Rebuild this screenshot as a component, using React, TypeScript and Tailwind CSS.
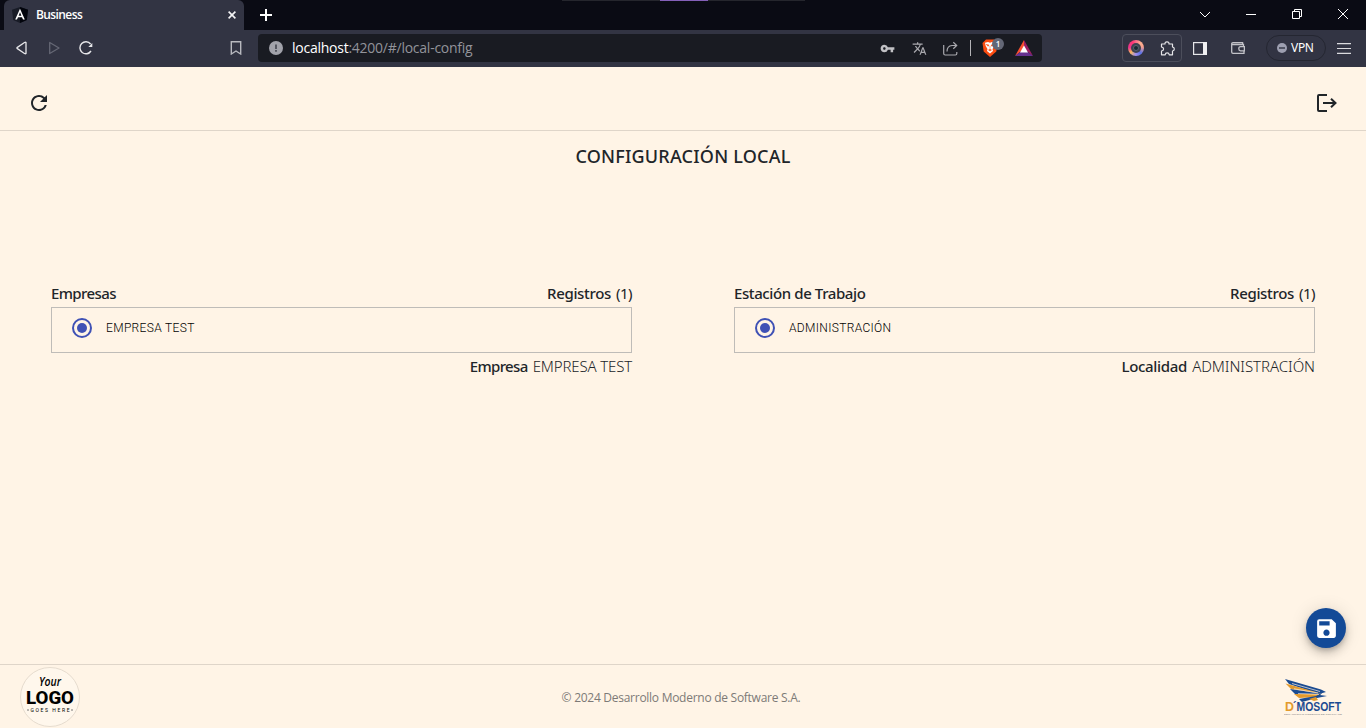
import type { ReactNode } from "react";
import { MdRefresh, MdSave, MdVpnKey, MdTranslate } from "react-icons/md";

function TabStrip() {
  return (
    <div className="relative flex h-[30px] shrink-0 bg-[#0a0b14]">
      <div className="ml-1 flex w-[240px] items-center rounded-t-[6px] bg-[#323443]">
        <svg className="ml-2 h-4 w-4" viewBox="0 0 16 16">
          <path d="M8 0 16 2.8 14.8 13 8 16 1.2 13 0 2.8Z" fill="#181b26" />
          <path d="M8 0 16 2.8 14.8 13 8 16Z" fill="#02040c" />
          <path d="M8 1.8 3.2 12.6H5l1-2.4h4l1 2.4h1.8ZM8 5.2 9.4 8.7H6.6Z" fill="#fff" />
        </svg>
        <span className="ml-2 flex-1 text-[12px] font-semibold leading-4 tracking-[-0.6px] text-white">Business</span>
        <svg className="mr-2 h-2 w-2" viewBox="0 0 8 8" stroke="#f4f4f6" strokeWidth="1.6">
          <path d="M.6.6 7.4 7.4M7.4.6.6 7.4" />
        </svg>
      </div>
      <svg className="ml-4 mt-[9px] h-3 w-3" viewBox="0 0 12 12" stroke="#fff" strokeWidth="2">
        <path d="M6 0V12M0 6H12" />
      </svg>
      <div className="absolute left-[562px] top-0 flex h-px w-[243px] justify-center bg-[#25262d]">
        <div className="h-px w-12 bg-[#8460b8]" />
      </div>
      <div className="ml-auto flex pt-[9px] text-white">
        <svg className="mr-[35px] h-[11px] w-[12px]" viewBox="0 0 12 11" fill="none" stroke="currentColor">
          <path d="M1 3 6 8 11 3" />
        </svg>
        <svg className="mr-9 h-[11px] w-[10px]" viewBox="0 0 10 11" stroke="currentColor">
          <path d="M0 5.5H10" />
        </svg>
        <svg className="mr-9 h-[10px] w-[10px]" viewBox="0 0 10 10" fill="none" stroke="currentColor">
          <path d="M.5 2.5H7.5V9.5H.5ZM2.5 2.5V.5H9.5V7.5H7.5" />
        </svg>
        <svg className="mr-[18px] h-[10px] w-[10px]" viewBox="0 0 10 10" stroke="currentColor">
          <path d="M0 0 10 10M10 0 0 10" />
        </svg>
      </div>
    </div>
  );
}

function AddressBar() {
  return (
    <div className="ml-4 flex h-7 w-[784px] items-center rounded-[4px] bg-[#191b22]">
      <svg className="ml-[11px] h-[14px] w-[14px]" viewBox="0 0 14 14">
        <circle cx="7" cy="7" r="7" fill="#a1a2aa" />
        <path d="M7 3.5V8M7 9V10.7" stroke="#4d4f59" strokeWidth="1.8" />
      </svg>
      <span className="ml-[9px] flex-1 text-[14px] leading-5 tracking-[-0.25px] text-[#92939a]">
        <span className="text-white">localhost</span>:4200/#/local-config
      </span>
      <MdVpnKey className="mr-[17px] h-[15px] w-[15px] text-[#c1c1c5]" />
      <MdTranslate className="mr-4 h-[15px] w-[15px] text-[#a9a9ae]" />
      <svg className="mr-3 h-[15px] w-[15px]" viewBox="0 0 15 15" fill="none" stroke="#a9a9ae" strokeWidth="1.2">
        <path d="M.7 4V12.5Q.7 14 2.2 14H12.4Q13.8 14 13.8 12.5V11M4 10.5Q4 5 9 4.5H13M10.3 1.2 13.7 4.5 10.3 7.8" />
      </svg>
      <div className="mr-[11px] h-4 w-px bg-[#b4b4b8]" />
      <div className="relative mr-[17px] h-[18px] w-[16px]">
        <svg className="h-[18px] w-[16px]" viewBox="0 0 16 18">
          <path d="M4 .5H12L15.5 4 14.3 12.5 8 18 1.7 12.5.5 4Z" fill="#fb4c11" />
          <path d="M3 3.8 6 3 8 3.7 10 3 13 3.8 12.3 7 10.5 10 11 12 8 14.5 5 12 5.5 10 3.7 7Z" fill="#fff" />
          <path d="M4.2 5.4 7 6 6.2 7.3ZM11.8 5.4 9 6 9.8 7.3ZM8 7V10M6.5 11 8 10.3 9.5 11 8 12Z" fill="#fb4c11" stroke="#fb4c11" strokeWidth=".5" />
        </svg>
        <span className="absolute -top-px left-[10px] flex h-3 w-3 items-center justify-center rounded-full bg-[#636776] text-[8px] font-semibold leading-none text-white">1</span>
      </div>
      <svg className="mr-[9px] h-[16px] w-[18px]" viewBox="0 0 18 16">
        <path d="M9 0 0 16 9 9Z" fill="#fb5030" />
        <path d="M9 0 18 16 9 9Z" fill="#9c1f63" />
        <path d="M0 16H18L9 9Z" fill="#65318f" />
        <path d="M9 5.5 13 12.5H5Z" fill="#fff" />
      </svg>
    </div>
  );
}

function Toolbar() {
  return (
    <div className="flex h-[37px] shrink-0 items-center bg-[#323443] pb-px">
      <svg className="ml-4 h-[14px] w-[11px]" viewBox="0 0 11 14" fill="none" stroke="#e6e6e9" strokeWidth="1.3" strokeLinejoin="round">
        <path d="M10 1.5V12.5Q9.5 13 8.5 12.5L1 7.4V6.6L8.5 1.5Q9.5 1 10 1.5Z" />
      </svg>
      <svg className="ml-[22px] h-[14px] w-[11px]" viewBox="0 0 11 14" fill="none" stroke="#656774" strokeWidth="1.3" strokeLinejoin="round">
        <path d="M.7 1.5V12.5L10 7Z" />
      </svg>
      <svg className="ml-[19px] h-[14px] w-[15px]" viewBox="0 0 15 14" fill="none" stroke="#e6e6e9" strokeWidth="1.4">
        <path d="M11.6 3A6 6 0 1 0 12 10" />
        <path d="M13.3 2V6H9.3Z" fill="#e6e6e9" stroke="none" />
      </svg>
      <svg className="ml-[136px] h-[14px] w-[12px]" viewBox="0 0 12 14" fill="none" stroke="#b8b9bf" strokeWidth="1.4">
        <path d="M1.3.7H10.7V13L6 10 1.3 13Z" />
      </svg>
      <AddressBar />
      <div className="ml-20 flex h-7 w-[60px] items-center rounded-[4px] border border-[#4c4e5b] pl-[5px]">
        <div className="flex h-4 w-4 items-center justify-center rounded-full bg-[conic-gradient(#fa6c8a,#fdb08f_12%,#f9a18d_22%,#5b72e8_38%,#9b8cf0_50%,#f8b65d_64%,#e9338d_76%,#ff3874_92%,#fa6c8a)]">
          <div className="flex h-[10px] w-[10px] items-center justify-center rounded-full bg-[#3d4150]">
            <div className="h-1.5 w-1.5 rounded-full border border-[#57646f] bg-[#182932]" />
          </div>
        </div>
        <svg className="ml-4 h-[15px] w-[15px]" viewBox="0 0 15 15" fill="none" stroke="#e6e6e9" strokeWidth="1.2" strokeLinejoin="round">
          <path d="M1.5 3H5Q4.8.8 7 .8T9 3H12.5V6Q14.3 6.2 14.3 8T12.5 10V13.8H9.2Q9 11.9 7.2 11.9T5.2 13.8H1.5V10Q3.6 9.7 3.6 8T1.5 6Z" />
        </svg>
      </div>
      <svg className="ml-[11px] h-[13px] w-[14px]" viewBox="0 0 14 13">
        <rect x=".6" y=".6" width="12.8" height="11.8" fill="none" stroke="#e6e6e9" strokeWidth="1.2" />
        <path d="M10 0H14V13H10Z" fill="#f0f0f2" />
      </svg>
      <svg className="ml-6 h-[12px] w-[14px]" viewBox="0 0 14 12" fill="none" stroke="#c2c2c8" strokeWidth="1.3">
        <path d="M12.5 4V2.5H2Q.7 2.5.7 1.6T2 .7H11.6V2.5M.7 1.6V10Q.7 11.3 2 11.3H13V9M13.4 4.7H9.5Q7.8 4.7 7.8 6.7T9.5 8.8H13.4Z" />
      </svg>
      <div className="ml-[21px] flex h-[26px] w-[60px] items-center rounded-full border border-[#242631] pl-[10px]">
        <svg className="h-[10px] w-[10px]" viewBox="0 0 10 10">
          <circle cx="5" cy="5" r="5" fill="#9d9fb0" />
          <path d="M2 5H8" stroke="#323443" strokeWidth="1.4" />
        </svg>
        <span className="ml-1 font-['Noto_Sans',sans-serif] text-[12px] leading-4 tracking-[-0.3px] text-white">VPN</span>
      </div>
      <svg className="ml-[11px] h-[11px] w-[14px]" viewBox="0 0 14 11" stroke="#dadade" strokeWidth="1.2">
        <path d="M0 .6H14M0 5.5H14M0 10.4H14" />
      </svg>
    </div>
  );
}

function SelectionPanel({ title, option, footer }: { title: ReactNode; option: ReactNode; footer: ReactNode }) {
  return (
    <section className="w-[581px]">
      <div className="flex h-[27px] justify-between text-[15px] leading-[26px]">
        {title}
        <span className="flex gap-[5px]">
          <span className="font-medium tracking-[-0.35px]">Registros</span>
          <span className="tracking-[-0.5px]">(1)</span>
        </span>
      </div>
      <div className="flex h-[46px] items-center border border-[#bfbcb8] pb-1 pl-5">
        <div className="flex h-5 w-5 items-center justify-center rounded-full border-2 border-[#3f51b5]">
          <div className="h-[10px] w-[10px] rounded-full bg-[#3f51b5]" />
        </div>
        {option}
      </div>
      <div className="-mt-px flex h-7 justify-end gap-[5px] text-[15px] leading-7">{footer}</div>
    </section>
  );
}

function YourLogo() {
  return (
    <svg className="h-[60px] w-[60px]" viewBox="0 0 60 60">
      <circle cx="30" cy="30" r="29.5" fill="#fff7ec" stroke="#e6dccf" />
      <text x="30" y="18.5" textAnchor="middle" textLength="22" lengthAdjust="spacingAndGlyphs" fontFamily="Open Sans, sans-serif" fontSize="12" fontStyle="italic" fontWeight="600">Your</text>
      <text x="30" y="36.5" textAnchor="middle" textLength="48" lengthAdjust="spacingAndGlyphs" fontFamily="Roboto, sans-serif" fontSize="19" fontWeight="800">LOGO</text>
      <text x="30" y="45" textAnchor="middle" textLength="39" fontFamily="Roboto, sans-serif" fontSize="5" fontWeight="400">GOES HERE</text>
      <path d="M7 43H9M51 43H53" stroke="#777" />
    </svg>
  );
}

function DmosoftLogo() {
  return (
    <svg className="h-[40px] w-[60px]" viewBox="0 -1 60 40">
      <path d="M1 1 37 11.5 42 14 35 16 5 6Z" fill="#1b4b91" />
      <path d="M1.5 5.5 32 14 38 16 7 11Z" fill="#e39a2d" />
      <path d="M6 11 34 15 37 17 11 16Z" fill="#1b4b91" />
      <path d="M10 16 36 16 33 19 15 20Z" fill="#e39a2d" />
      <path d="M15 21 32 18 39 14 36 17 43 18 33 20 18 24Z" fill="#1b4b91" />
      <path d="M25 21 32 19 34 22 30 23Z" fill="#e39a2d" />
      <path d="M8 5.5 36 13.5M10 10.8 34 15M14 15.6 35 16.3" stroke="#fff4e6" strokeWidth=".7" />
      <text x="1" y="32.5" textLength="9" lengthAdjust="spacingAndGlyphs" fontFamily="Liberation Sans, sans-serif" fontSize="12" fontWeight="700" fill="#e39a2d">D</text>
      <text x="9" y="32.5" textLength="48" lengthAdjust="spacingAndGlyphs" fontFamily="Liberation Sans, sans-serif" fontSize="12" fontWeight="700" fill="#1b4b91">´MOSOFT</text>
      <text x="0" y="36.5" textLength="58" lengthAdjust="spacingAndGlyphs" fontFamily="Liberation Sans, sans-serif" fontSize="2.5" fill="#888">DESARROLLO MODERNO DE SOFTWARE</text>
    </svg>
  );
}

export default function App() {
  return (
    <div className="flex h-[728px] w-[1366px] flex-col overflow-hidden bg-[#fff4e6] font-['Open_Sans','Noto_Sans',sans-serif] text-[#212529]">
      <TabStrip />
      <Toolbar />
      <header className="flex h-16 shrink-0 items-center justify-between border-b border-[#dfd5c9] pl-[27px] pr-[29px] pt-[9px]">
        <MdRefresh className="h-6 w-6" />
        <svg className="h-[18px] w-5" viewBox="0 0 20 18" fill="none" stroke="currentColor" strokeWidth="2">
          <path d="M10 1H2Q1 1 1 2V16Q1 17 2 17H10M6 9H18M14 4.7 18.5 9 14 13.3" />
        </svg>
      </header>
      <main className="flex flex-1 flex-col font-['Noto_Sans',sans-serif]">
        <h1 className="mt-[11px] text-center text-[18px] font-medium leading-7 tracking-[0.22px]">CONFIGURACIÓN LOCAL</h1>
        <div className="mt-[110px] flex justify-between px-[51px]">
          <SelectionPanel
            title={<span className="font-medium tracking-[-0.6px]">Empresas</span>}
            option={<span className="ml-[14px] font-['Roboto',sans-serif] text-[12px] font-light tracking-[0.34px] text-black">EMPRESA TEST</span>}
            footer={
              <>
                <span className="font-medium tracking-[-0.65px]">Empresa</span>
                <span className="font-light tracking-[-0.15px]">EMPRESA TEST</span>
              </>
            }
          />
          <SelectionPanel
            title={<span className="font-medium tracking-[-0.4px]">Estación de Trabajo</span>}
            option={<span className="ml-[14px] font-['Roboto',sans-serif] text-[12px] font-light tracking-[0.34px] text-black">ADMINISTRACIÓN</span>}
            footer={
              <>
                <span className="font-medium tracking-[-0.3px]">Localidad</span>
                <span className="font-light tracking-[-0.05px]">ADMINISTRACIÓN</span>
              </>
            }
          />
        </div>
        <button className="mb-4 ml-auto mr-5 mt-auto flex h-10 w-10 items-center justify-center rounded-full bg-[#134a97] text-white shadow-[0_3px_5px_-1px_rgba(0,0,0,.2),0_6px_10px_rgba(0,0,0,.14),0_1px_18px_rgba(0,0,0,.12)]">
          <MdSave className="h-[25px] w-[25px]" />
        </button>
      </main>
      <footer className="grid h-16 shrink-0 grid-cols-3 items-center border-t border-[#dfd5c9] pl-5 pr-[22px]">
        <YourLogo />
        <p className="pr-0.5 pt-0.5 text-center text-[12px] tracking-[-0.27px] text-[#7d7a77]">© 2024 Desarrollo Moderno de Software S.A.</p>
        <div className="flex justify-end"><DmosoftLogo /></div>
      </footer>
    </div>
  );
}
